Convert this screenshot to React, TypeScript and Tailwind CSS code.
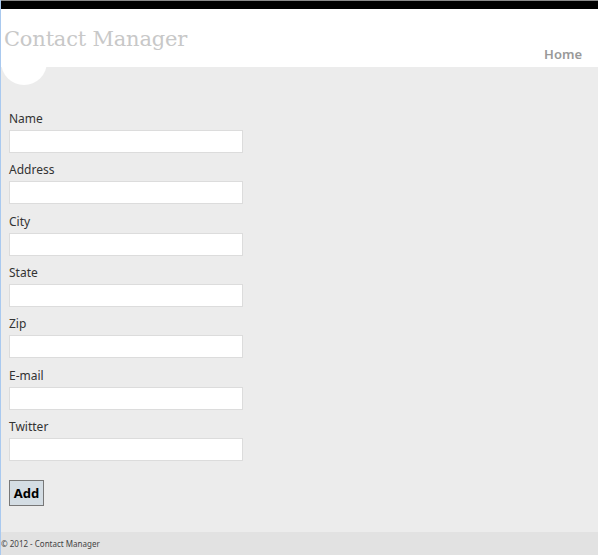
import React from 'react'

const fields = ['Name', 'Address', 'City', 'State', 'Zip', 'E-mail', 'Twitter']

const App = () => {
  return (
    <div
      className="w-[598px] h-[555px] flex flex-col border-l border-[#a9c9ef] bg-[#ececec] overflow-hidden"
      style={{ fontFamily: '"Noto Sans", "Open Sans", sans-serif' }}
    >
      {/* Header */}
      <div className="border-t border-[#8a8a8a]">
        <div className="h-[8px] bg-black" />
      </div>
      <div className="relative h-[58px] bg-white flex justify-between">
        <div className="absolute left-0 top-[30px] size-[46px] rounded-full bg-white" />
        <h1
          className="relative pl-[3px] pt-[15px] text-[21px] leading-[30px] text-[#c8c8c8] tracking-[-0.2px]"
          style={{ fontFamily: '"DejaVu Serif", serif' }}
        >
          Contact Manager
        </h1>
        <nav className="pt-[36px] pr-[16px] text-[13px] leading-[18px] text-[#999999] font-semibold">
          Home
        </nav>
      </div>

      {/* Form */}
      <div className="flex-1 px-[8px] pt-[43px]">
        {fields.map((f) => (
          <div key={f} className="mb-[8.33px]">
            <label className="block text-[12px] leading-[18px] text-[#333333] mb-[2px]">{f}</label>
            <input className="block w-[234px] h-[23px] bg-white border border-[#dcdcdc] outline-none" />
          </div>
        ))}
        <button className="mt-[11px] w-[35px] h-[26px] bg-[#d4dde4] border border-[#777777] text-[13px] font-bold text-black">
          Add
        </button>
      </div>

      {/* Footer */}
      <div className="h-[23px] bg-[#e2e2e2] text-[8px] leading-[23px] text-[#444444]">
        © 2012 - Contact Manager
      </div>
    </div>
  )
}

export default App
